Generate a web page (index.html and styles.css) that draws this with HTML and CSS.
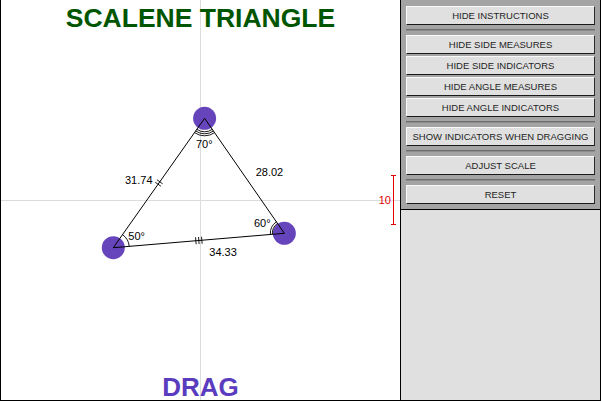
FILE: index.html
```html
<!DOCTYPE html>
<html>
<head>
<meta charset="utf-8">
<title>Scalene Triangle</title>
<link rel="stylesheet" href="styles.css">
</head>
<body>
<div class="app">
  <div class="stage">
    <svg class="board" width="399" height="400" viewBox="1 0 399 400" xmlns="http://www.w3.org/2000/svg">
      <line class="axis" x1="1" y1="200.5" x2="400" y2="200.5"/>
      <line class="axis" x1="200.5" y1="0" x2="200.5" y2="400"/>
      <circle class="handle" cx="204.6" cy="118.3" r="11.5"/>
      <circle class="handle" cx="113.3" cy="247.7" r="11.5"/>
      <circle class="handle" cx="284.35" cy="233.3" r="11.5"/>
      <polygon class="tri" points="204.6,118.3 113.3,247.7 284.35,233.3"/>
      <path class="mark" d="M212.29 129.39 A13.5 13.5 0 0 1 196.82 129.33 M213.43 131.04 A15.5 15.5 0 0 1 195.67 130.96 M214.57 132.68 A17.5 17.5 0 0 1 194.51 132.60"/>
      <path class="mark" d="M122.52 234.63 A16 16 0 0 1 129.24 246.36"/>
      <path class="mark" d="M272.39 234.31 A12 12 0 0 1 277.51 223.44 M270.40 234.47 A14 14 0 0 1 276.37 221.80"/>
      <path class="mark" d="M155.23 182.21 L160.95 186.25 M156.95 179.75 L162.67 183.79"/>
      <path class="mark" d="M198.54 237.01 L199.12 243.99 M201.53 236.76 L202.11 243.74 M195.55 237.26 L196.13 244.24"/>
      <text class="lbl" x="125" y="184">31.74</text>
      <text class="lbl" x="255.7" y="176">28.02</text>
      <text class="lbl" x="209.3" y="255.7">34.33</text>
      <text class="lbl" x="196" y="148.3">70°</text>
      <text class="lbl" x="128.3" y="240">50°</text>
      <text class="lbl" x="254" y="227">60°</text>
      <path class="scale" d="M393.5 175 L393.5 225 M391 175.5 L396 175.5 M391 224.5 L396 224.5"/>
      <text class="scale-lbl" x="391" y="204.3">10</text>
    </svg>
    <div class="overlay">
      <h1 class="title">SCALENE TRIANGLE</h1>
      <div class="drag">DRAG</div>
    </div>
  </div>
  <div class="panel">
    <div class="controls">
      <div class="group">
        <button class="btn">HIDE INSTRUCTIONS</button>
      </div>
      <div class="sep"></div>
      <div class="group">
        <button class="btn">HIDE SIDE MEASURES</button>
        <button class="btn">HIDE SIDE INDICATORS</button>
        <button class="btn">HIDE ANGLE MEASURES</button>
        <button class="btn">HIDE ANGLE INDICATORS</button>
      </div>
      <div class="sep"></div>
      <div class="group">
        <button class="btn">SHOW INDICATORS WHEN DRAGGING</button>
      </div>
      <div class="sep"></div>
      <div class="group">
        <button class="btn">ADJUST SCALE</button>
      </div>
      <div class="sep"></div>
      <div class="group">
        <button class="btn">RESET</button>
      </div>
    </div>
    <div class="info"></div>
  </div>
</div>
</body>
</html>
```
FILE: styles.css
```css
html, body {
  margin: 0;
  padding: 0;
  background: #fff;
  font-family: "Liberation Sans", Arial, sans-serif;
}

.app {
  display: flex;
  width: 601px;
  height: 401px;
  box-sizing: border-box;
  border-left: 1px solid #000;
  border-right: 1px solid #000;
  border-bottom: 1px solid #000;
}

.stage {
  width: 399px;
  height: 400px;
  display: grid;
  background: #fff;
  border-right: 1px solid #000;
}

.board,
.overlay {
  grid-area: 1 / 1;
}

.board {
  display: block;
}

.axis {
  stroke: #dcdcdc;
  stroke-width: 1;
}

.handle {
  fill: #6644bb;
}

.tri {
  fill: none;
  stroke: #000;
  stroke-width: 1;
}

.mark {
  fill: none;
  stroke: #000;
  stroke-width: 0.9;
}

.lbl {
  font-family: "Liberation Sans", Arial, sans-serif;
  font-size: 11px;
  fill: #000;
}

.scale {
  fill: none;
  stroke: #e00000;
  stroke-width: 1;
}

.scale-lbl {
  font-family: "Liberation Sans", Arial, sans-serif;
  font-size: 11px;
  fill: #e00000;
  text-anchor: end;
}

.overlay {
  display: flex;
  flex-direction: column;
  justify-content: space-between;
  align-items: center;
  pointer-events: none;
}

.title {
  margin: 0;
  padding-top: 3px;
  font-size: 26.5px;
  line-height: 30px;
  font-weight: bold;
  color: #005500;
}

.drag {
  font-size: 26px;
  line-height: 26px;
  font-weight: bold;
  color: #5a3cbe;
}

.panel {
  width: 199px;
  display: flex;
  flex-direction: column;
  background: #a4a4a4;
}

.controls {
  padding: 6px 5px 5px;
}

.group {
  display: flex;
  flex-direction: column;
  gap: 2px;
}

.btn {
  display: block;
  width: 100%;
  height: 19px;
  margin: 0;
  padding: 0;
  box-sizing: border-box;
  border: 1px solid;
  border-color: #fafafa #2a2a2a #1a1a1a #fafafa;
  background: #e0e0e0;
  color: #1e1e1e;
  font-family: "Liberation Sans", Arial, sans-serif;
  font-size: 9.5px;
  line-height: 17px;
  text-align: center;
}

.sep {
  height: 1px;
  margin: 4px 0;
  background: #6e6e6e;
  border-bottom: 1px solid #8c8c8c;
}

.info {
  flex: 1;
  background: #e0e0e0;
  border-top: 1px solid #000;
}
```
